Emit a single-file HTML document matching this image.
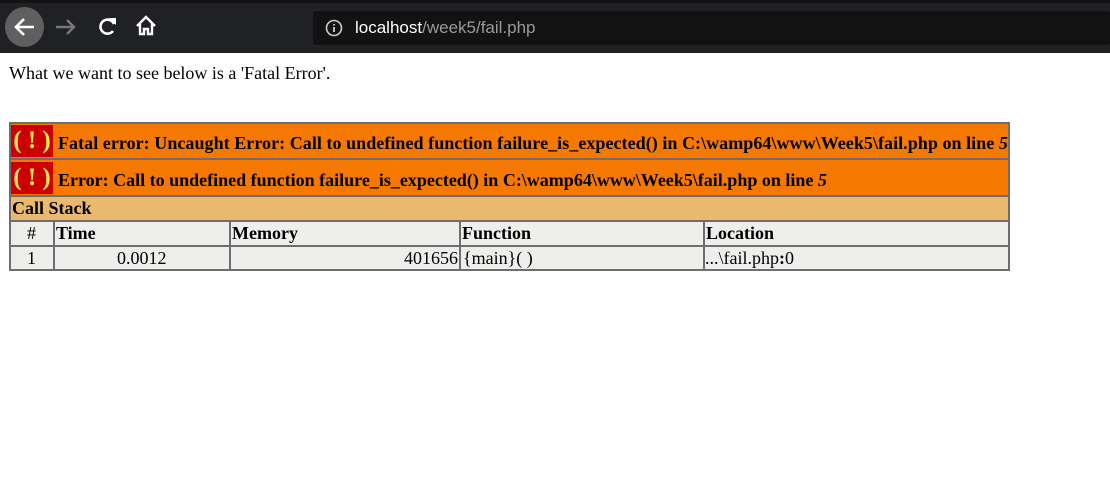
<!DOCTYPE html>
<html><head><style>
*{margin:0;padding:0;box-sizing:border-box}
body{width:1110px;height:498px;background:#fff;position:relative;overflow:hidden;font-family:"Liberation Serif",serif;color:#000}
.bar{position:absolute;left:0;top:0;width:1110px;height:53px;background:#202124}
.strip{position:absolute;left:0;top:0;width:1110px;height:3px;background:#141414}
.url{position:absolute;left:313px;top:11px;width:797px;height:34px;background:#121212;border-radius:3px}
.a{position:absolute}
.r{position:absolute;left:9px;width:1001px;border:2px solid #6e6e6e;border-top:none}
.t{position:absolute;font-size:18px;font-weight:bold;white-space:nowrap}
.c{position:absolute;font-size:18px;white-space:nowrap}
.ic{position:absolute;left:11px;width:42px;height:32px;background:#cc0000;color:#fce94f;font-weight:bold;font-size:25px;text-align:center;line-height:32px;white-space:nowrap;overflow:hidden}
.v{position:absolute;width:2px;background:#6e6e6e}
</style></head><body>
<div class="bar"></div><div class="strip"></div>
<div class="a" style="left:5px;top:7px;width:39px;height:40px;border-radius:50%;background:#5f5f5f"></div>
<svg class="a" style="left:0;top:0" width="200" height="53">
<path d="M34 27H16M24 19l-8 8 8 8" stroke="#fff" stroke-width="2.6" fill="none"/>
<path d="M56 27h18M67 20l7 7-7 7" stroke="#777" stroke-width="2.4" fill="none"/>
<path d="M114 24a7 7 0 1 0 -1 7" stroke="#fff" stroke-width="2.6" fill="none"/><path d="M109 18h7v7z" fill="#fff"/>
<path d="M137 26l9-9 9 9M140 24v10h4v-5h4v5h4v-10" stroke="#fff" stroke-width="2.4" fill="none"/>
</svg>
<div class="url"></div>
<svg class="a" style="left:325px;top:19px" width="18" height="18"><circle cx="9" cy="9" r="7.5" stroke="#ccc" stroke-width="1.6" fill="none"/><path d="M9 8v5M9 5v1.5" stroke="#ccc" stroke-width="1.8"/></svg>
<div class="a" style="left:355px;top:18px;font-family:'Liberation Sans',sans-serif;font-size:17px;color:#fff">localhost<span style="color:#9a9a9a">/week5/fail.php</span></div>
<div class="a" style="left:9px;top:63px;font-size:18px">What we want to see below is a 'Fatal Error'.</div>

<div class="r" style="top:122px;height:38px;background:#f57900;border-top:2px solid #6e6e6e"></div>
<div class="r" style="top:160px;height:37px;background:#f57900"></div>
<div class="r" style="top:197px;height:25px;background:#e9b96e"></div>
<div class="r" style="top:222px;height:25px;background:#eeeeec"></div>
<div class="r" style="top:247px;height:24px;background:#eeeeec"></div>
<div class="ic" style="top:125px">(&nbsp;!&nbsp;)</div>
<div class="ic" style="top:162px">(&nbsp;!&nbsp;)</div>
<div class="t" style="left:58px;top:133px;letter-spacing:0.05px">Fatal error: Uncaught Error: Call to undefined function failure_is_expected() in C:\wamp64\www\Week5\fail.php on line <i>5</i></div>
<div class="t" style="left:58px;top:170px">Error: Call to undefined function failure_is_expected() in C:\wamp64\www\Week5\fail.php on line <i>5</i></div>
<div class="t" style="left:12px;top:198px">Call Stack</div>
<div class="v" style="left:53px;top:222px;height:48px"></div>
<div class="v" style="left:229px;top:222px;height:48px"></div>
<div class="v" style="left:459px;top:222px;height:48px"></div>
<div class="v" style="left:703px;top:222px;height:48px"></div>
<div class="c" style="left:27px;top:223px">#</div>
<div class="t" style="left:56px;top:223px">Time</div>
<div class="t" style="left:232px;top:223px">Memory</div>
<div class="t" style="left:462px;top:223px">Function</div>
<div class="t" style="left:706px;top:223px">Location</div>
<div class="c" style="left:27px;top:248px">1</div>
<div class="c" style="left:117px;top:248px">0.0012</div>
<div class="c" style="right:652px;top:248px">401656</div>
<div class="c" style="left:463px;top:248px">{main}( )</div>
<div class="c" style="left:705px;top:248px">...\fail.php<b>:</b>0</div>
</body></html>
